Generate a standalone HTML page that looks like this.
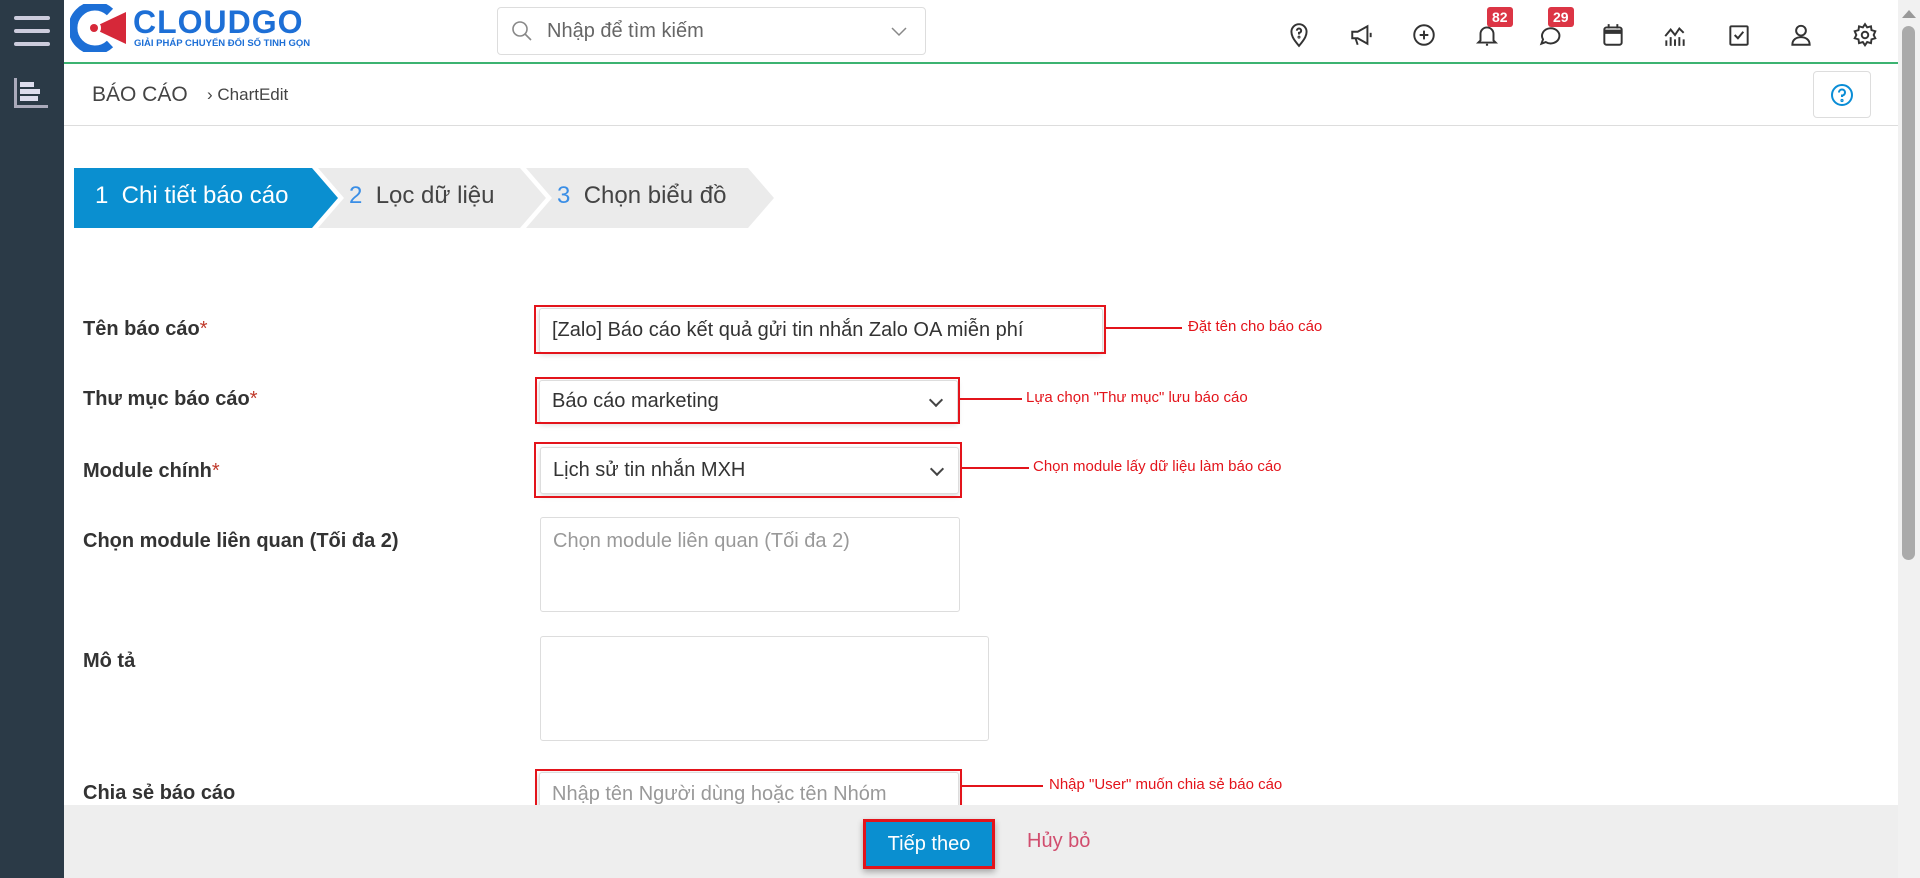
<!DOCTYPE html>
<html><head><meta charset="utf-8"><style>
*{box-sizing:border-box;margin:0;padding:0}
body{width:1920px;height:878px;overflow:hidden;background:#fff;font-family:"Liberation Sans","Noto Sans CJK SC",sans-serif;position:relative;color:#333}
.abs{position:absolute}
.side{left:0;top:0;width:64px;height:878px;background:#2b3a47}
.hdr{left:64px;top:0;width:1834px;height:64px;border-bottom:2px solid #3cb371;background:#fff}
.icon{position:absolute;top:22px;width:26px;height:26px}
.badge{position:absolute;top:7px;background:#dc3545;color:#fff;font-size:14px;font-weight:bold;padding:2px 5px;border-radius:3px;line-height:16px}
.lbl{position:absolute;left:83px;font-size:20px;font-weight:600;color:#333}
.lbl i{color:#c0392b;font-style:normal;font-weight:normal}
.red{position:absolute;border:2px solid #e3141b}
.inp{position:absolute;border:1px solid #ddd;border-radius:3px;background:#fff;font-size:20px;color:#333;padding-left:12px;display:flex;align-items:center;box-shadow:0 2px 6px rgba(0,0,0,.15)}
.chev{position:absolute;right:16px;top:50%;width:10px;height:10px;border-right:2px solid #444;border-bottom:2px solid #444;transform:translateY(-70%) rotate(45deg)}
.ann{position:absolute;height:2px;background:#e3141b}
.at{position:absolute;font-size:15px;color:#e3141b}
</style></head><body>
<div class="abs side">
  <div class="abs" style="left:14px;top:16px;width:36px;height:4px;background:#ccd;border-radius:2px"></div>
  <div class="abs" style="left:14px;top:29px;width:36px;height:4px;background:#ccd;border-radius:2px"></div>
  <div class="abs" style="left:14px;top:42px;width:36px;height:4px;background:#ccd;border-radius:2px"></div>
  <div class="abs" style="left:14px;top:78px;width:3px;height:30px;background:#aab"></div>
  <div class="abs" style="left:14px;top:105px;width:34px;height:3px;background:#aab"></div>
  <div class="abs" style="left:20px;top:82px;width:14px;height:5px;background:#dde"></div>
  <div class="abs" style="left:20px;top:89px;width:20px;height:5px;background:#dde"></div>
  <div class="abs" style="left:20px;top:96px;width:18px;height:5px;background:#dde"></div>
</div>
<div class="abs hdr"></div>
<svg class="abs" style="left:70px;top:4px" width="58" height="48" viewBox="0 0 58 48">
  <path d="M40 8 A22 22 0 1 0 40 40" fill="none" stroke="#1d6fd6" stroke-width="9"/>
  <path d="M22 24 L56 8 L56 40 Z" fill="#d62839"/>
  <circle cx="24" cy="24" r="7" fill="#fff"/><circle cx="24" cy="24" r="4" fill="#d62839"/>
</svg>
<div class="abs" style="left:133px;top:4px;font-size:32px;font-weight:bold;color:#1d6fd6;letter-spacing:1px">CLOUDGO</div>
<div class="abs" style="left:134px;top:38px;font-size:9.5px;font-weight:bold;color:#1d6fd6">GIẢI PHÁP CHUYỂN ĐỔI SỐ TINH GỌN</div>
<div class="abs" style="left:497px;top:7px;width:429px;height:48px;border:1px solid #ddd;border-radius:4px"></div>
<svg class="abs" style="left:510px;top:19px" width="24" height="24" viewBox="0 0 24 24"><circle cx="10" cy="10" r="7" fill="none" stroke="#888" stroke-width="1.6"/><path d="M15 15 L21 21" stroke="#888" stroke-width="1.6"/></svg>
<div class="abs" style="left:547px;top:20px;font-size:20px;color:#666">Nhập để tìm kiếm</div>
<svg class="abs" style="left:890px;top:26px" width="18" height="12" viewBox="0 0 18 12"><path d="M2 2 L9 9 L16 2" fill="none" stroke="#888" stroke-width="1.5"/></svg>
<svg class="icon" style="left:1286px" viewBox="0 0 24 24" fill="none" stroke="#333" stroke-width="1.8"><path d="M12 22 C6 15 5 12 5 9 a7 7 0 0 1 14 0 c0 3-1 6-7 13z"/><path d="M10 8 a2 2 0 1 1 2 2 v1.5"/><circle cx="12" cy="14" r=".5"/></svg>
<svg class="icon" style="left:1349px" viewBox="0 0 24 24" fill="none" stroke="#333" stroke-width="1.8"><path d="M3 9 h5 l9 -5 v16 l-9 -5 h-5z"/><path d="M6 15 l2 6"/><path d="M20 10 v4"/></svg>
<svg class="icon" style="left:1411px" viewBox="0 0 24 24" fill="none" stroke="#333" stroke-width="1.8"><circle cx="12" cy="12" r="9"/><path d="M12 8v8M8 12h8"/></svg>
<svg class="icon" style="left:1474px" viewBox="0 0 24 24" fill="none" stroke="#333" stroke-width="1.8"><path d="M6 17 V11 a6 6 0 0 1 12 0 v6 l2 2 H4z"/><path d="M11 21 h2"/></svg>
<div class="badge" style="left:1487px">82</div>
<svg class="icon" style="left:1536px" viewBox="0 0 24 24" fill="none" stroke="#333" stroke-width="1.8"><path d="M5 20 l1.5-4 A8 7 0 1 1 9 18.5z"/></svg>
<div class="badge" style="left:1548px">29</div>
<svg class="icon" style="left:1600px" viewBox="0 0 24 24" fill="none" stroke="#333" stroke-width="1.8"><rect x="4" y="5" width="16" height="16" rx="2"/><path d="M4 9h16" stroke-width="4"/><path d="M8 2v4M16 2v4"/></svg>
<svg class="icon" style="left:1662px" viewBox="0 0 24 24" fill="none" stroke="#333" stroke-width="1.8"><path d="M3 13 l5-6 4 5 4-6 4 4"/><path d="M4 22v-5M8 22v-8M12 22v-6M16 22v-8M20 22v-6"/></svg>
<svg class="icon" style="left:1726px" viewBox="0 0 24 24" fill="none" stroke="#333" stroke-width="1.8"><rect x="4" y="4" width="16" height="17" rx="1"/><path d="M8 12 l3 3 5-6"/></svg>
<svg class="icon" style="left:1788px" viewBox="0 0 24 24" fill="none" stroke="#333" stroke-width="1.8"><circle cx="12" cy="8" r="4.5"/><path d="M4 21 c0-5 4-7 8-7 s8 2 8 7z"/></svg>
<svg class="icon" style="left:1852px" viewBox="0 0 24 24" fill="none" stroke="#333" stroke-width="1.8"><circle cx="12" cy="12" r="3"/><path d="M12 2 l2 3 3.5-1 .5 3.5 3.5 1-1.5 3.5 1.5 3-3.5 1-.5 3.5-3.5-1-2 3-2-3-3.5 1-.5-3.5-3.5-1 1.5-3-1.5-3.5 3.5-1 .5-3.5 3.5 1z"/></svg>
<div class="abs" style="left:1898px;top:0;width:22px;height:878px;background:#f1f1f1"></div>
<div class="abs" style="left:1902px;top:10px;width:0;height:0;border-left:7px solid transparent;border-right:7px solid transparent;border-bottom:8px solid #999"></div>
<div class="abs" style="left:1902px;top:26px;width:13px;height:534px;background:#aaa;border-radius:7px"></div>
<div class="abs" style="left:64px;top:125px;width:1834px;height:1px;background:#ddd"></div>
<div class="abs" style="left:92px;top:83px;font-size:21px;color:#444">BÁO CÁO</div>
<div class="abs" style="left:207px;top:85px;font-size:17px;color:#444">› ChartEdit</div>
<div class="abs" style="left:1813px;top:71px;width:58px;height:47px;border:1px solid #ddd;border-radius:4px"></div>
<svg class="abs" style="left:1830px;top:83px" width="24" height="24" viewBox="0 0 24 24" fill="none" stroke="#0a8dd6" stroke-width="2"><circle cx="12" cy="12" r="10"/><path d="M9 9.5 a3 3 0 1 1 3 3 v1.5"/><circle cx="12" cy="17.5" r=".6"/></svg>
<svg class="abs" style="left:74px;top:168px" width="710" height="60">
  <path d="M0 0 H238 L264 30 L238 60 H0Z" fill="#0a8fd0"/>
  <path d="M244 0 H446 L472 30 L446 60 H244 L270 30Z" fill="#ebebeb"/>
  <path d="M452 0 H674 L700 30 L674 60 H452 L478 30Z" fill="#ebebeb"/>
</svg>
<div class="abs" style="left:95px;top:182px;font-size:24px;color:#fff">1&nbsp; Chi tiết báo cáo</div>
<div class="abs" style="left:349px;top:182px;font-size:24px;color:#444"><span style="color:#3a8ee6">2</span>&nbsp; Lọc dữ liệu</div>
<div class="abs" style="left:557px;top:182px;font-size:24px;color:#444"><span style="color:#3a8ee6">3</span>&nbsp; Chọn biểu đồ</div>
<div class="lbl" style="top:318px">Tên báo cáo<i>*</i></div>
<div class="inp" style="left:539px;top:308px;width:564px;height:45px">[Zalo] Báo cáo kết quả gửi tin nhắn Zalo OA miễn phí</div>
<div class="red" style="left:534px;top:305px;width:572px;height:49px"></div>
<div class="ann" style="left:1106px;top:327px;width:76px"></div>
<div class="at" style="left:1188px;top:318px">Đặt tên cho báo cáo</div>
<div class="lbl" style="top:388px">Thư mục báo cáo<i>*</i></div>
<div class="inp" style="left:539px;top:380px;width:419px;height:43px">Báo cáo marketing<span class="chev"></span></div>
<div class="red" style="left:535px;top:377px;width:425px;height:47px"></div>
<div class="ann" style="left:960px;top:398px;width:62px"></div>
<div class="at" style="left:1026px;top:389px">Lựa chọn "Thư mục" lưu báo cáo</div>
<div class="lbl" style="top:460px">Module chính<i>*</i></div>
<div class="inp" style="left:540px;top:447px;width:419px;height:47px">Lịch sử tin nhắn MXH<span class="chev"></span></div>
<div class="red" style="left:534px;top:442px;width:428px;height:56px"></div>
<div class="ann" style="left:962px;top:467px;width:67px"></div>
<div class="at" style="left:1033px;top:458px">Chọn module lấy dữ liệu làm báo cáo</div>
<div class="lbl" style="top:530px">Chọn module liên quan (Tối đa 2)</div>
<div class="abs" style="left:540px;top:517px;width:420px;height:95px;border:1px solid #ddd;border-radius:3px;font-size:20px;color:#999;padding:12px 12px">Chọn module liên quan (Tối đa 2)</div>
<div class="lbl" style="top:650px">Mô tả</div>
<div class="abs" style="left:540px;top:636px;width:449px;height:105px;border:1px solid #ddd;border-radius:3px"></div>
<div class="lbl" style="top:782px">Chia sẻ báo cáo</div>
<div class="inp" style="left:539px;top:772px;width:420px;height:44px;color:#999;box-shadow:0 2px 6px rgba(0,0,0,.2)">Nhập tên Người dùng hoặc tên Nhóm</div>
<div class="red" style="left:535px;top:769px;width:427px;height:50px"></div>
<div class="ann" style="left:962px;top:785px;width:81px"></div>
<div class="at" style="left:1049px;top:776px">Nhập "User" muốn chia sẻ báo cáo</div>
<div class="abs" style="left:64px;top:805px;width:1834px;height:73px;background:#eee"></div>
<div class="abs" style="left:863px;top:819px;width:132px;height:50px;border:3px solid #e3141b;background:#0a8fd0;box-shadow:0 3px 6px rgba(0,0,0,.3);color:#fff;font-size:20px;display:flex;align-items:center;justify-content:center">Tiếp theo</div>
<div class="abs" style="left:1027px;top:830px;font-size:20px;color:#d14d6e">Hủy bỏ</div>
</body></html>
